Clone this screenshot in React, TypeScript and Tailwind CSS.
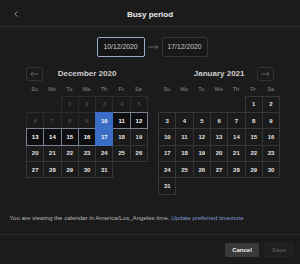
import React from 'react';

const WEEKDAYS = ['Su', 'Mo', 'Tu', 'We', 'Th', 'Fr', 'Sa'];

type Kind = 'off' | 'edge' | 'range' | 'normal';

function decKind(d: number): Kind {
  if (d < 10) return 'off';
  if (d === 10 || d === 17) return 'edge';
  if (d > 10 && d < 17) return 'range';
  return 'normal';
}

const cellClass: Record<Kind, string> = {
  off: 'border-[#2c2c2c] text-[#4a4a4a]',
  edge: 'relative z-[2] border-[#3a6ec6] bg-[#3a6ec6] text-white',
  range: 'relative z-[1] border-[#7a8392] bg-[#0e0e10] text-white',
  normal: 'border-[#363636] text-[#e4e4e4]',
};

function Arrow({ dir }: { dir: 'left' | 'right' }) {
  return (
    <svg width="9" height="6" viewBox="0 0 9 6" fill="none" stroke="#666" strokeWidth="0.9">
      {dir === 'left' ? (
        <path d="M8.5 3H0.8M3 0.8L0.8 3L3 5.2" />
      ) : (
        <path d="M0.5 3H8.2M6 0.8L8.2 3L6 5.2" />
      )}
    </svg>
  );
}

function Month({
  title,
  offset,
  count,
  kind,
  nav,
}: {
  title: string;
  offset: number;
  count: number;
  kind: (d: number) => Kind;
  nav: 'prev' | 'next';
}) {
  const navButton = (
    <button
      className={`flex h-[14px] w-[16.5px] items-center justify-center rounded-[2px] border border-[#333] ${
        nav === 'next' ? 'justify-self-end mr-[6.5px]' : ''
      }`}
    >
      <Arrow dir={nav === 'prev' ? 'left' : 'right'} />
    </button>
  );
  return (
    <div className="w-[122.1px]">
      <div className="grid h-[14px] grid-cols-[23px_1fr_23px] items-center">
        {nav === 'prev' ? navButton : <span />}
        <div className="text-center text-[8px] font-bold leading-none text-[#cfcfcf]">{title}</div>
        {nav === 'next' ? navButton : <span />}
      </div>
      <div className="mt-[3px] grid h-[12px] grid-cols-[repeat(7,17.3px)] items-center text-center text-[5.5px] leading-none text-[#8a8a8a]">
        {WEEKDAYS.map((w) => (
          <span key={w}>{w}</span>
        ))}
      </div>
      <div className="grid grid-cols-[repeat(7,17.3px)] auto-rows-[16.4px]">
        {Array.from({ length: offset }).map((_, i) => (
          <div key={`e${i}`} />
        ))}
        {Array.from({ length: count }).map((_, i) => {
          const d = i + 1;
          const k = kind(d);
          return (
            <div
              key={d}
              className={`-mb-px -mr-px flex items-center justify-center border text-[6px] font-bold leading-none ${cellClass[k]}`}
            >
              {d}
            </div>
          );
        })}
      </div>
    </div>
  );
}

export default function App() {
  return (
    <div
      className="h-[264px] w-[300px] overflow-hidden bg-[#1b1b1b] text-[#e0e0e0]"
      style={{ fontFamily: '"Liberation Sans", Arial, sans-serif' }}
    >
      <div className="relative flex h-[27px] items-center justify-center border-b border-[#2e2e2e]">
        <svg className="absolute left-[14px] top-[11px]" width="4" height="6" viewBox="0 0 4 6" fill="none" stroke="#a8a8a8" strokeWidth="0.9">
          <path d="M3.3 0.5L0.8 3L3.3 5.5" />
        </svg>
        <span className="mt-[4px] text-[8px] font-bold text-[#ececec]">Busy period</span>
      </div>

      <div className="mt-[10px] flex items-center justify-center gap-[3px] pl-[4px]">
        <div className="flex h-[19.5px] w-[48px] items-center justify-center rounded-[2px] border-[1.5px] border-[#9aabc9] bg-[#161616] text-[6.8px] text-[#d0d0d0]">
          10/12/2020
        </div>
        <svg width="11" height="6" viewBox="0 0 11 6" fill="none" stroke="#6f6f6f" strokeWidth="0.9">
          <path d="M0.5 3H10M7.8 0.8L10 3L7.8 5.2" />
        </svg>
        <div className="flex h-[19.5px] w-[46px] items-center justify-center rounded-[2px] border border-[#353535] bg-[#181818] text-[6.8px] text-[#c8c8c8]">
          17/12/2020
        </div>
      </div>

      <div className="mt-[10px] flex gap-[10px] pl-[26px]">
        <Month title="December 2020" offset={2} count={31} kind={decKind} nav="prev" />
        <Month title="January 2021" offset={5} count={31} kind={() => 'normal'} nav="next" />
      </div>

      <p className="mt-[20px] pl-[9.5px] text-[6.1px] leading-[8px] text-[#b8b8b8]">
        You are viewing the calendar in America/Los_Angeles time.{' '}
        <span className="text-[#7f9bd0]">Update preferred timezone</span>
      </p>

      <div className="mt-[12.5px] flex justify-end gap-[6px] border-t-[1.5px] border-[#2c2c2c] pr-[7px] pt-[8px]">
        <button className="h-[14px] w-[34px] rounded-[2px] bg-[#3a3a3a] text-[6px] font-bold text-[#f0f0f0]">
          Cancel
        </button>
        <button className="h-[14px] w-[28px] rounded-[2px] border border-[#262626] bg-[#1f1f1f] text-[6px] font-bold text-[#555]">
          Save
        </button>
      </div>
    </div>
  );
}
